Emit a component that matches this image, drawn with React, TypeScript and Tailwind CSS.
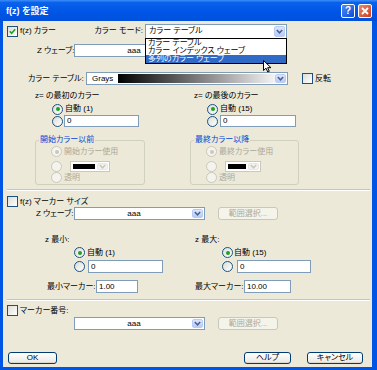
import React from "react";

function Check({ checked }: { checked?: boolean }) {
  return (
    <span className="relative w-[11px] h-[11px] shrink-0 border border-[#1c5180] bg-[linear-gradient(135deg,#dcdcd7,#ffffff)] flex items-center justify-center">
      {checked && (
        <svg width="7" height="7" viewBox="0 0 7 7">
          <path d="M0.8 3.2 L2.6 5.2 L6.2 1.2" stroke="#21a121" strokeWidth="1.6" fill="none" />
        </svg>
      )}
    </span>
  );
}

function Radio({ checked, disabled }: { checked?: boolean; disabled?: boolean }) {
  return (
    <span
      className={
        "w-[11px] h-[11px] shrink-0 rounded-full border flex items-center justify-center " +
        (disabled
          ? "border-[#cac8bb] bg-[#f4f3ee]"
          : "border-[#1c5180] bg-[linear-gradient(135deg,#dcdcd7,#ffffff)]")
      }
    >
      {checked && (
        <span
          className={
            "w-[4px] h-[4px] rounded-full " + (disabled ? "bg-[#cac8bb]" : "bg-[#21a121]")
          }
        />
      )}
    </span>
  );
}

function Arrow({ disabled }: { disabled?: boolean }) {
  return (
    <span
      className={
        "w-[11px] h-full shrink-0 rounded-[2px] border flex items-center justify-center " +
        (disabled
          ? "border-[#e8e7e0] bg-[#f4f3ee]"
          : "border-[#b9ccf8] bg-[linear-gradient(to_bottom,#dce6fd,#b7cbf9)]")
      }
    >
      <svg width="7" height="5" viewBox="0 0 7 5">
        <path
          d="M0.8 1 L3.5 3.8 L6.2 1"
          stroke={disabled ? "#c9c7ba" : "#4d6185"}
          strokeWidth="1.5"
          fill="none"
        />
      </svg>
    </span>
  );
}

function TextBox({ w, value }: { w: string; value: string }) {
  return (
    <div className={w + " h-full shrink-0 border border-[#7f9db9] bg-white flex items-center pl-[2px] leading-[10px]"}>
      {value}
    </div>
  );
}

function Combo({ w }: { w: string }) {
  return (
    <div className={w + " h-full shrink-0 border border-[#7f9db9] bg-white flex p-[1px]"}>
      <div className="flex-1 flex items-center justify-center leading-[10px]">aaa</div>
      <Arrow />
    </div>
  );
}

function Btn({ w, label, disabled }: { w: string; label: string; disabled?: boolean }) {
  return (
    <div
      className={
        w +
        " h-full shrink-0 rounded-[3px] border flex items-center justify-center leading-[10px] " +
        (disabled
          ? "border-[#c9c7ba] bg-[#f5f4ea] text-[#aca899]"
          : "border-[#003c74] bg-[linear-gradient(to_bottom,#ffffff,#ecebe6_85%,#d6d0c5)] text-black")
      }
    >
      {label}
    </div>
  );
}

function Swatch({ w }: { w: string }) {
  return (
    <div className={w + " h-full shrink-0 border border-[#cac8bb] bg-white flex p-[1px] gap-[1px]"}>
      <div className="flex-1 bg-black border border-white" />
      <Arrow disabled />
    </div>
  );
}

function Group({ w, title, first, sw }: { w: string; title: string; first: string; sw: string }) {
  return (
    <div className={w + " relative mt-[13px] h-[45px] rounded-[3px] border border-[#d0d0bf] pt-[5px] text-[#aca899]"}>
      <span className="absolute left-[3px] -top-[6px] px-[1px] bg-[#ece9d8] text-[#0046d5] leading-[10px]">
        {title}
      </span>
      <div className="h-[11px] flex items-center ml-[15px]">
        <Radio checked disabled />
        <span className="ml-[2px] leading-[10px]">{first}</span>
      </div>
      <div className="h-[11px] mt-[4px] flex items-center ml-[15px]">
        <Radio disabled />
        <div className="ml-[8px] h-full flex">
          <Swatch w={sw} />
        </div>
      </div>
      <div className="h-[11px] flex items-center ml-[15px]">
        <Radio disabled />
        <span className="ml-[2px] leading-[10px]">透明</span>
      </div>
    </div>
  );
}

function Sep() {
  return <div className="ml-[4px] mr-[2px] h-[2px] border-t border-[#c8c5b5] border-b border-b-white" />;
}

export default function App() {
  return (
    <div className="relative w-[377px] h-[370px] bg-[#0055e5] flex flex-col text-[8px] text-black font-['Liberation_Sans','Noto_Sans_CJK_JP',sans-serif] [font-feature-settings:'palt'] overflow-hidden">
      {/* title bar */}
      <div className="h-[21px] shrink-0 flex items-center bg-[linear-gradient(to_bottom,#3d8ef8_0%,#0a62ec_12%,#0055e5_55%,#0050dc_100%)]">
        <span className="ml-[6px] text-white font-bold text-[9px] leading-[10px]">f(z) を設定</span>
        <div className="ml-auto mr-[5px] flex gap-[3px]">
          <span className="w-[14px] h-[14px] rounded-[2px] border border-white bg-[linear-gradient(135deg,#4f8cf8,#0a4bd6)] flex items-center justify-center text-white font-bold text-[10px] leading-[10px]">
            ?
          </span>
          <span className="w-[14px] h-[14px] rounded-[2px] border border-white bg-[linear-gradient(135deg,#eb8a6c,#c8401f)] flex items-center justify-center">
            <svg width="8" height="8" viewBox="0 0 8 8">
              <path d="M1 1 L7 7 M7 1 L1 7" stroke="white" strokeWidth="1.8" />
            </svg>
          </span>
        </div>
      </div>

      {/* body */}
      <div className="flex-1 ml-[3px] mr-[5px] mb-[3px] bg-[#ece9d8] flex flex-col">
        {/* color mode row */}
        <div className="mt-[1px] h-[18px] flex items-center">
          <div className="w-[140px] flex items-center">
            <span className="ml-[4px]">
              <Check checked />
            </span>
            <span className="ml-[2px] leading-[10px]">f(z) カラー</span>
            <span className="ml-auto leading-[10px]">カラー モード:</span>
          </div>
          <div className="ml-[2px] w-[142px] h-[15px] border border-[#7f9db9] bg-white flex p-[1px]">
            <div className="flex-1 flex items-center pl-[2px] leading-[10px]">カラー テーブル</div>
            <Arrow />
          </div>
        </div>

        {/* z wave (its range button is hidden under the open list) */}
        <div className="mt-[4px] h-[13px] flex items-center">
          <span className="ml-[34px] w-[37px] leading-[10px] whitespace-nowrap">Z ウェーブ:</span>
          <Combo w="w-[131px]" />
        </div>

        {/* color table */}
        <div className="mt-[15px] h-[13px] flex items-center">
          <span className="ml-[25px] w-[58px] leading-[10px] whitespace-nowrap">カラー テーブル:</span>
          <div className="w-[202px] h-full border border-[#7f9db9] bg-white flex p-[1px]">
            <div className="w-[30px] flex items-center pl-[4px] leading-[10px]">Grays</div>
            <div className="flex-1 bg-[linear-gradient(to_right,#000000,#f4f4f4)]" />
            <Arrow />
          </div>
          <span className="ml-[14px]">
            <Check />
          </span>
          <span className="ml-[2px] leading-[10px]">反転</span>
        </div>

        {/* first / last color */}
        <div className="mt-[6px] flex">
          <div className="ml-[32px] w-[155px] flex flex-col">
            <span className="h-[10px] leading-[10px]">z= の最初のカラー</span>
            <div className="mt-[2px] h-[12px] flex items-center">
              <span className="ml-[17px]">
                <Radio checked />
              </span>
              <span className="ml-[2px] leading-[10px]">自動 (1)</span>
            </div>
            <div className="h-[12px] flex items-center">
              <span className="ml-[17px]">
                <Radio />
              </span>
              <div className="ml-[1px] h-full flex">
                <TextBox w="w-[75px]" value="0" />
              </div>
            </div>
            <Group w="w-[110px]" title="開始カラー以前" first="開始カラー使用" sw="w-[40px]" />
          </div>
          <div className="w-[182px] flex flex-col">
            <span className="ml-[4px] h-[10px] leading-[10px]">z= の最後のカラー</span>
            <div className="mt-[2px] h-[12px] flex items-center">
              <span className="ml-[17px]">
                <Radio checked />
              </span>
              <span className="ml-[2px] leading-[10px]">自動 (15)</span>
            </div>
            <div className="h-[12px] flex items-center">
              <span className="ml-[17px]">
                <Radio />
              </span>
              <div className="ml-[2px] h-full flex">
                <TextBox w="w-[76px]" value="0" />
              </div>
            </div>
            <Group w="w-[109px]" title="最終カラー以降" first="最終カラー使用" sw="w-[36px]" />
          </div>
        </div>

        <div className="mt-[4px]">
          <Sep />
        </div>

        {/* marker size */}
        <div className="mt-[5px] h-[11px] flex items-center">
          <span className="ml-[4px]">
            <Check />
          </span>
          <span className="ml-[2px] leading-[10px]">f(z) マーカー サイズ</span>
        </div>
        <div className="h-[13px] flex items-center">
          <span className="ml-[33px] w-[38px] leading-[10px] whitespace-nowrap">Z ウェーブ:</span>
          <Combo w="w-[131px]" />
          <div className="ml-[13px] h-full flex">
            <Btn w="w-[60px]" label="範囲選択..." disabled />
          </div>
        </div>

        <div className="mt-[15px] flex">
          <div className="ml-[42px] w-[150px] flex flex-col">
            <span className="h-[10px] leading-[10px]">z 最小:</span>
            <div className="mt-[2px] h-[11px] flex items-center">
              <span className="ml-[29px]">
                <Radio checked />
              </span>
              <span className="ml-[2px] leading-[10px]">自動 (1)</span>
            </div>
            <div className="mt-[2px] h-[13px] flex items-center">
              <span className="ml-[29px]">
                <Radio />
              </span>
              <div className="ml-[3px] h-full flex">
                <TextBox w="w-[75px]" value="0" />
              </div>
            </div>
            <div className="mt-[7px] h-[13px] flex items-center">
              <span className="ml-[2px] w-[49px] leading-[10px] whitespace-nowrap">最小マーカー:</span>
              <TextBox w="w-[42px]" value="1.00" />
            </div>
          </div>
          <div className="w-[177px] flex flex-col">
            <span className="h-[10px] leading-[10px]">z 最大:</span>
            <div className="mt-[2px] h-[11px] flex items-center">
              <span className="ml-[27px]">
                <Radio checked />
              </span>
              <span className="ml-[1px] leading-[10px]">自動 (15)</span>
            </div>
            <div className="mt-[2px] h-[13px] flex items-center">
              <span className="ml-[27px]">
                <Radio />
              </span>
              <div className="ml-[4px] h-full flex">
                <TextBox w="w-[74px]" value="0" />
              </div>
            </div>
            <div className="mt-[7px] h-[13px] flex items-center">
              <span className="w-[49px] leading-[10px] whitespace-nowrap">最大マーカー:</span>
              <TextBox w="w-[47px]" value="10.00" />
            </div>
          </div>
        </div>

        <div className="mt-[6px]">
          <Sep />
        </div>

        {/* marker number */}
        <div className="mt-[4px] h-[11px] flex items-center">
          <span className="ml-[4px]">
            <Check />
          </span>
          <span className="ml-[2px] leading-[10px]">マーカー番号:</span>
        </div>
        <div className="mt-[1px] h-[13px] flex items-center">
          <span className="ml-[71px]" />
          <Combo w="w-[131px]" />
          <div className="ml-[13px] h-full flex">
            <Btn w="w-[60px]" label="範囲選択..." disabled />
          </div>
        </div>

        {/* buttons */}
        <div className="mt-[22px] h-[12px] flex">
          <div className="ml-[5px] h-full flex">
            <Btn w="w-[49px]" label="OK" />
          </div>
          <div className="ml-[187px] h-full flex">
            <Btn w="w-[47px]" label="ヘルプ" />
          </div>
          <div className="ml-[16px] h-full flex">
            <Btn w="w-[56px]" label="キャンセル" />
          </div>
        </div>
      </div>

      {/* open dropdown list */}
      <div className="absolute left-[145px] top-[38px] w-[142px] h-[26px] border border-black bg-white flex flex-col leading-[8px]">
        <div className="h-[8px] pl-[2px]">カラー テーブル</div>
        <div className="h-[8px] pl-[2px]">カラー インデックス ウェーブ</div>
        <div className="h-[8px] pl-[2px] bg-[#316ac5] text-white">多列のカラー ウェーブ</div>
      </div>

      {/* mouse cursor */}
      <svg className="absolute left-[263px] top-[60px]" width="9" height="13" viewBox="0 0 9 13">
        <path d="M0.5 0.5 L0.5 10.5 L3 8.2 L4.8 12 L6.3 11.3 L4.6 7.7 L8 7.7 Z" fill="white" stroke="black" strokeWidth="1" />
      </svg>
    </div>
  );
}
